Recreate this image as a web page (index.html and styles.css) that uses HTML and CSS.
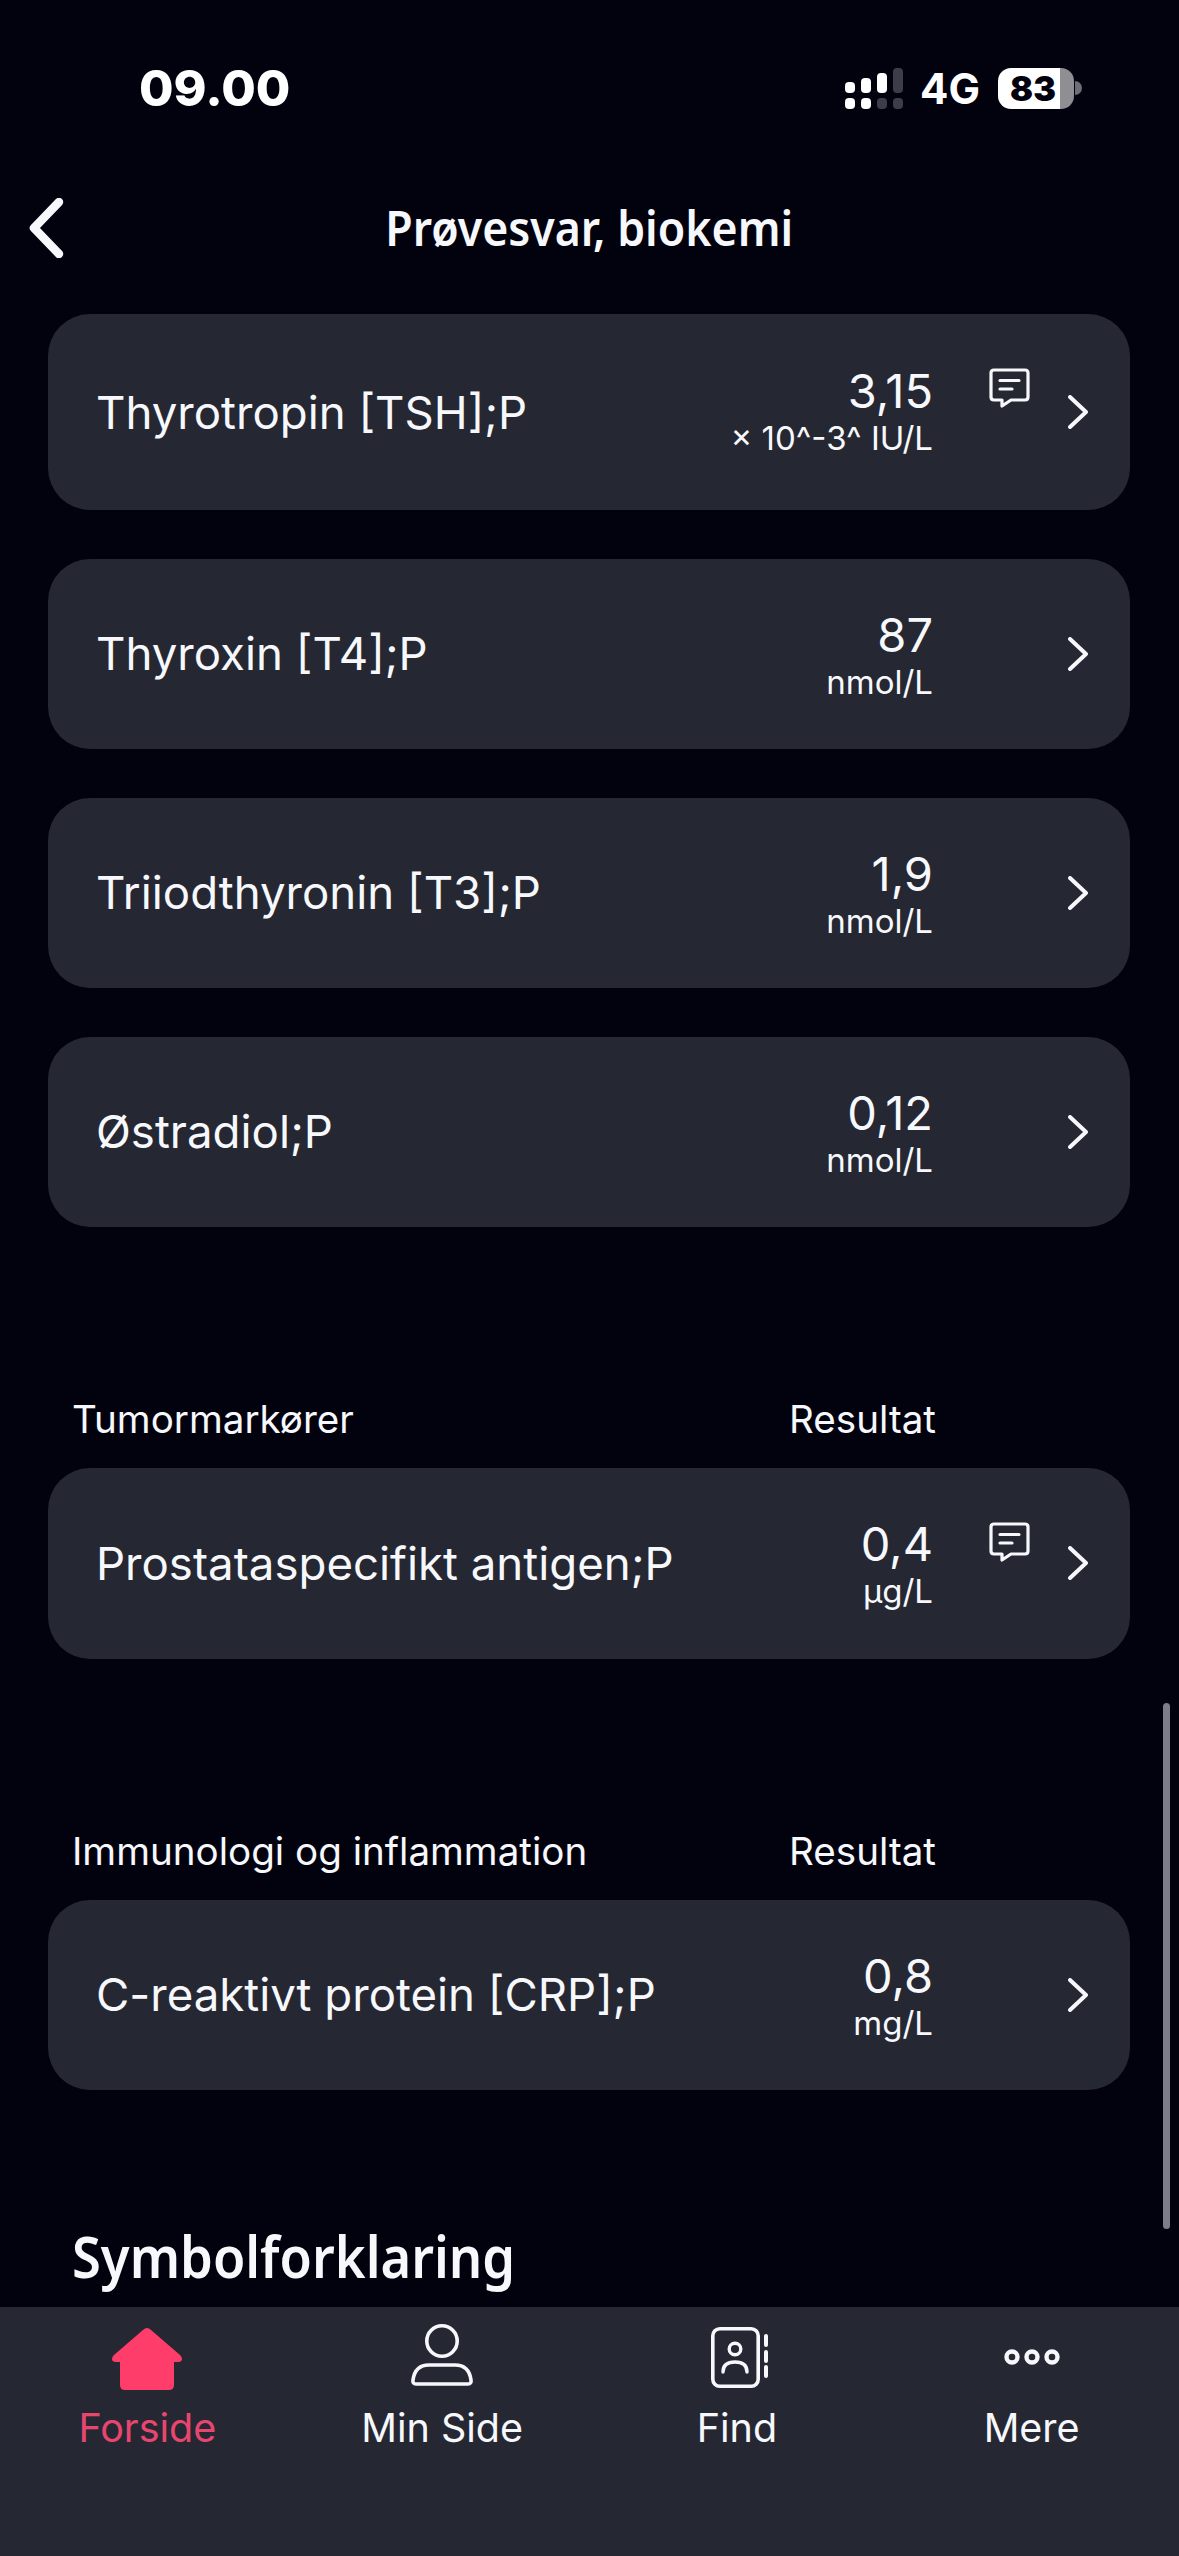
FILE: index.html
```html
<!DOCTYPE html>
<html lang="en">
<head>
  <meta charset="UTF-8" />
  <title>Prøvesvar, biokemi</title>
  <link rel="stylesheet" href="styles.css">
</head>
<body>
  <div class="screen">
    <!-- Status bar -->
    <div class="status-bar">
      <span class="clock">09.00</span>
      <div class="status-icons">
        <svg class="signal" width="58" height="41" viewBox="0 0 58 41">
          <rect x="0" y="14" width="10" height="11" rx="4" fill="#fff"/>
          <rect x="16" y="10" width="10" height="15" rx="4" fill="#fff"/>
          <rect x="32" y="5" width="10" height="20" rx="4" fill="#fff"/>
          <rect x="48" y="0" width="10" height="25" rx="4" fill="#3c3d48"/>
          <rect x="0" y="30" width="10" height="11" rx="4" fill="#fff"/>
          <rect x="16" y="30" width="10" height="11" rx="4" fill="#fff"/>
          <rect x="32" y="30" width="10" height="11" rx="4" fill="#3c3d48"/>
          <rect x="48" y="30" width="10" height="11" rx="4" fill="#3c3d48"/>
        </svg>
        <span class="network">4G</span>
        <div class="battery">
          <div class="battery-body"><span>83</span></div>
          <div class="battery-nub"></div>
        </div>
      </div>
    </div>

    <!-- Nav bar -->
    <div class="nav-bar">
      <svg class="back" width="36" height="60" viewBox="0 0 36 60">
        <path d="M31 4 L6 30 L31 56" fill="none" stroke="#f7f8fc" stroke-width="8.5" stroke-linecap="round" stroke-linejoin="round"/>
      </svg>
      <h1>Prøvesvar, biokemi</h1>
    </div>

    <!-- Results -->
    <div class="content">
      <div class="scroll-thumb"></div>

      <div class="result-list">
        <div class="result result-tall">
          <span class="result-name">Thyrotropin [TSH];P</span>
          <div class="result-value"><span class="value">3,15</span><span class="unit">× 10^-3^ IU/L</span></div>
          <div class="note-slot">
            <svg width="41" height="41" viewBox="0 0 41 41"><path d="M5 2 H36 Q39 2 39 5 V29 Q39 32 36 32 H22 L13 38 V32 H5 Q2 32 2 29 V5 Q2 2 5 2 Z" fill="none" stroke="#f7f8fc" stroke-width="3.2" stroke-linejoin="round"/><path d="M11 12.5 H30 M11 21 H23" stroke="#f7f8fc" stroke-width="3.2" stroke-linecap="round"/></svg>
          </div>
          <svg class="chevron" width="20" height="34" viewBox="0 0 20 34"><path d="M2 2 L18 17 L2 32" fill="none" stroke="#f7f8fc" stroke-width="4" stroke-linecap="round" stroke-linejoin="round"/></svg>
        </div>

        <div class="result">
          <span class="result-name">Thyroxin [T4];P</span>
          <div class="result-value"><span class="value">87</span><span class="unit">nmol/L</span></div>
          <div class="note-slot"></div>
          <svg class="chevron" width="20" height="34" viewBox="0 0 20 34"><path d="M2 2 L18 17 L2 32" fill="none" stroke="#f7f8fc" stroke-width="4" stroke-linecap="round" stroke-linejoin="round"/></svg>
        </div>

        <div class="result">
          <span class="result-name">Triiodthyronin [T3];P</span>
          <div class="result-value"><span class="value">1,9</span><span class="unit">nmol/L</span></div>
          <div class="note-slot"></div>
          <svg class="chevron" width="20" height="34" viewBox="0 0 20 34"><path d="M2 2 L18 17 L2 32" fill="none" stroke="#f7f8fc" stroke-width="4" stroke-linecap="round" stroke-linejoin="round"/></svg>
        </div>

        <div class="result">
          <span class="result-name">Østradiol;P</span>
          <div class="result-value"><span class="value">0,12</span><span class="unit">nmol/L</span></div>
          <div class="note-slot"></div>
          <svg class="chevron" width="20" height="34" viewBox="0 0 20 34"><path d="M2 2 L18 17 L2 32" fill="none" stroke="#f7f8fc" stroke-width="4" stroke-linecap="round" stroke-linejoin="round"/></svg>
        </div>
      </div>

      <div class="group-head"><span>Tumormarkører</span><span class="group-result">Resultat</span></div>
      <div class="result-list">
        <div class="result">
          <span class="result-name">Prostataspecifikt antigen;P</span>
          <div class="result-value"><span class="value">0,4</span><span class="unit">µg/L</span></div>
          <div class="note-slot">
            <svg width="41" height="41" viewBox="0 0 41 41"><path d="M5 2 H36 Q39 2 39 5 V29 Q39 32 36 32 H22 L13 38 V32 H5 Q2 32 2 29 V5 Q2 2 5 2 Z" fill="none" stroke="#f7f8fc" stroke-width="3.2" stroke-linejoin="round"/><path d="M11 12.5 H30 M11 21 H23" stroke="#f7f8fc" stroke-width="3.2" stroke-linecap="round"/></svg>
          </div>
          <svg class="chevron" width="20" height="34" viewBox="0 0 20 34"><path d="M2 2 L18 17 L2 32" fill="none" stroke="#f7f8fc" stroke-width="4" stroke-linecap="round" stroke-linejoin="round"/></svg>
        </div>
      </div>

      <div class="group-head"><span>Immunologi og inflammation</span><span class="group-result">Resultat</span></div>
      <div class="result-list">
        <div class="result">
          <span class="result-name">C-reaktivt protein [CRP];P</span>
          <div class="result-value"><span class="value">0,8</span><span class="unit">mg/L</span></div>
          <div class="note-slot"></div>
          <svg class="chevron" width="20" height="34" viewBox="0 0 20 34"><path d="M2 2 L18 17 L2 32" fill="none" stroke="#f7f8fc" stroke-width="4" stroke-linecap="round" stroke-linejoin="round"/></svg>
        </div>
      </div>

      <h2 class="legend-title">Symbolforklaring</h2>
    </div>

    <!-- Tab bar -->
    <div class="tab-bar">
      <div class="tab tab-active">
        <svg width="70" height="66" viewBox="0 0 70 66"><path d="M35 4 Q37 4 39 6 L68 31 Q70 33 70 35 Q70 38 66 38 H62 V61 Q62 66 57 66 H13 Q8 66 8 61 V38 H4 Q0 38 0 35 Q0 33 2 31 L31 6 Q33 4 35 4 Z" fill="#ff3d6a"/></svg>
        <span>Forside</span>
      </div>
      <div class="tab">
        <svg width="62" height="66" viewBox="0 0 62 66"><circle cx="31" cy="17" r="15.2" fill="none" stroke="#f7f8fc" stroke-width="3.6"/><path d="M18 41 H44 Q58 41 60 56 Q60.5 60 57 60 H5 Q1.5 60 2 56 Q4 41 18 41 Z" fill="none" stroke="#f7f8fc" stroke-width="3.6" stroke-linejoin="round"/></svg>
        <span>Min Side</span>
      </div>
      <div class="tab">
        <svg width="62" height="66" viewBox="0 0 62 66"><rect x="6.8" y="4.8" width="45.4" height="57.4" rx="7" fill="none" stroke="#f7f8fc" stroke-width="3.6"/><circle cx="29" cy="25" r="5.8" fill="none" stroke="#f7f8fc" stroke-width="3.4"/><path d="M17 48 Q17 38 29 38 Q41 38 41 48" fill="none" stroke="#f7f8fc" stroke-width="3.4" stroke-linecap="round"/><path d="M60 12 V21 M60 28 V37 M60 43 V52" stroke="#f7f8fc" stroke-width="4" stroke-linecap="round"/></svg>
        <span>Find</span>
      </div>
      <div class="tab">
        <svg width="62" height="66" viewBox="0 0 62 66"><g fill="none" stroke="#f7f8fc" stroke-width="4.4"><circle cx="11" cy="33" r="5.5"/><circle cx="31" cy="33" r="5.5"/><circle cx="51" cy="33" r="5.5"/></g></svg>
        <span>Mere</span>
      </div>
    </div>
  </div>
</body>
</html>
```

FILE: styles.css
```css
* {
  box-sizing: border-box;
}

html, body {
  margin: 0;
  padding: 0;
  height: 100%;
  background-color: #02020f;
  font-family: Inter, "Liberation Sans", sans-serif;
  color: #f7f8fc;
}

.screen {
  display: flex;
  flex-direction: column;
  width: 1179px;
  height: 2556px;
  overflow: hidden;
}

/* status bar */
.status-bar {
  display: flex;
  justify-content: space-between;
  align-items: center;
  flex: 0 0 176px;
  padding: 0 97px 0 139px;
}

.clock {
  font-size: 50px;
  font-weight: 800;
  color: #fff;
}

.status-icons {
  display: flex;
  align-items: center;
}

.signal {
  margin-left: 3px;
}

.network {
  margin-left: 17px;
  font-size: 42px;
  font-weight: 700;
  color: #fff;
}

.battery {
  display: flex;
  align-items: center;
  margin-left: 18px;
}

.battery-body {
  display: flex;
  align-items: center;
  justify-content: center;
  width: 76px;
  height: 41px;
  border-radius: 13px;
  background: linear-gradient(to right, #fff 81%, #8e8e93 81%);
}

.battery-body span {
  padding-right: 6px;
  font-size: 34px;
  font-weight: 900;
  color: #02020f;
}

.battery-nub {
  width: 7px;
  height: 14px;
  margin-left: 1px;
  border-radius: 0 7px 7px 0;
  background: #6e6e76;
}

/* nav bar */
.nav-bar {
  position: relative;
  display: flex;
  justify-content: center;
  align-items: center;
  flex: 0 0 104px;
}

.nav-bar h1 {
  margin: 0 0 2px;
  font-family: "Noto Sans", sans-serif;
  font-size: 48px;
  font-weight: 600;
  transform: scaleX(0.93);
}

.back {
  position: absolute;
  left: 28px;
  top: 22px;
}

/* results */
.content {
  position: relative;
  flex: 1;
  min-height: 0;
  padding: 34px 49px 0 48px;
  overflow: hidden;
}

.scroll-thumb {
  position: absolute;
  right: 9px;
  top: 1423px;
  width: 7px;
  height: 526px;
  border-radius: 4px;
  background: #7c7d86;
}

.result-list {
  display: flex;
  flex-direction: column;
  gap: 48.5px;
}

.result {
  display: flex;
  align-items: center;
  height: 190.5px;
  padding: 0 42px 0 48px;
  border-radius: 42px;
  background-color: #252833;
}

.result-tall {
  height: 196px;
}

.result-name {
  flex: 1;
  font-size: 45.6px;
}

.result-value {
  display: flex;
  flex-direction: column;
  align-items: flex-end;
  margin-top: 5px;
}

.result-tall .result-value {
  margin-top: 0;
}

.value {
  font-size: 47px;
  line-height: 52px;
}

.unit {
  font-size: 33px;
  line-height: 43px;
}

.note-slot {
  align-self: flex-start;
  width: 41px;
  height: 41px;
  margin: 54px 38px 0 56px;
}

.chevron {
  flex: none;
}

.group-head {
  display: flex;
  justify-content: space-between;
  margin-top: 167px;
  padding: 0 194px 0 24px;
  height: 74px;
  font-size: 38.6px;
  line-height: 50px;
}

.legend-title {
  margin: 126px 0 0 24px;
  font-family: "Noto Sans", sans-serif;
  font-size: 58px;
  font-weight: 600;
  transform: scaleX(0.905);
  transform-origin: left;
}

/* tab bar */
.tab-bar {
  display: grid;
  grid-template-columns: repeat(4, 1fr);
  flex: 0 0 249px;
  padding: 17px 0 0 0;
  background-color: #252833;
}

.tab {
  display: flex;
  flex-direction: column;
  align-items: center;
  gap: 13px;
  font-size: 39.5px;
  line-height: 50px;
}

.tab-active {
  color: #e8466f;
}
```
